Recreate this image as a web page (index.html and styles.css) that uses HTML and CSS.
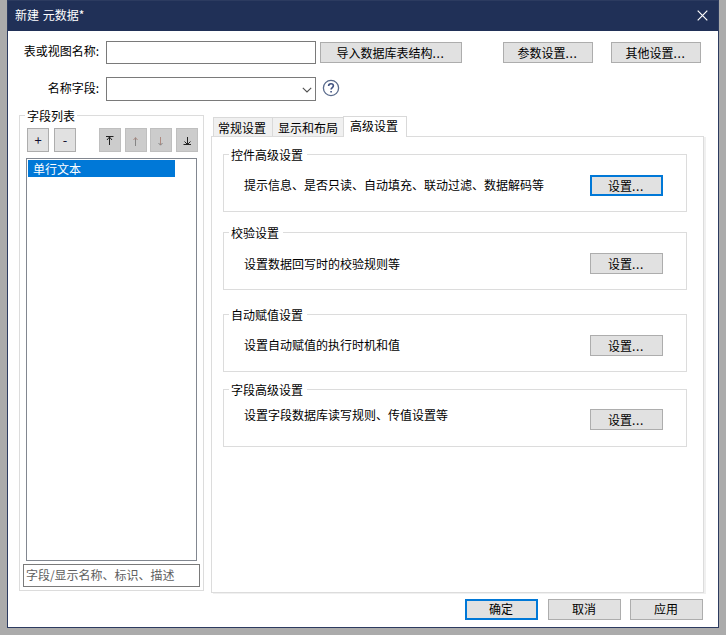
FILE: index.html
```
<!DOCTYPE html>
<html lang="zh-CN">
<head>
<meta charset="utf-8">
<title>新建 元数据</title>
<link rel="stylesheet" href="styles.css">
</head>
<body>
<main class="dialog">
  <header class="titlebar">
    <span>新建 元数据*</span>
    <svg class="close" width="11" height="11" viewBox="0 0 11 11"><path d="M.7.7l9.6 9.6M10.3.7L.7 10.3"/></svg>
  </header>
  <div class="form">
    <div class="row row-name">
      <label class="label">表或视图名称:</label>
      <div class="input"></div>
      <button class="btn import">导入数据库表结构<i>...</i></button>
      <button class="btn wide param">参数设置<i>...</i></button>
      <button class="btn wide other">其他设置<i>...</i></button>
    </div>
    <div class="row row-field">
      <label class="label">名称字段:</label>
      <div class="input combo"><svg width="10" height="6" viewBox="0 0 10 6"><path d="M.8.8L5 5 9.200.8"/></svg></div>
      <svg class="help" width="18" height="18" viewBox="0 0 18 18"><circle cx="9" cy="9" r="7.600"/><path class="q" d="M6.600 7.100C6.600 5.500 7.600 4.700 9 4.700s2.400.8 2.400 2.100c0 1.700-2.300 1.800-2.300 3.700M9.100 12v1.600"/></svg>
    </div>
  </div>
  <div class="content">
    <section class="fields">
      <h2 class="legend">字段列表</h2>
      <div class="tools">
        <button class="tool sign">+</button>
        <button class="tool sign minus">-</button>
        <button class="tool off first"><svg width="12" height="12" viewBox="0 0 12 12"><path class="k" d="M2 2.500h7.500M5.500 3v8M3 6l2.500-3L8 6"/></svg></button>
        <button class="tool off up"><svg width="12" height="12" viewBox="0 0 12 12"><path class="g" d="M5.500 3.500V12"/><path class="r" d="M3.500 6l2-2.300 2 2.300"/></svg></button>
        <button class="tool off down"><svg width="12" height="12" viewBox="0 0 12 12"><path class="r" d="M5.500 3v8"/><path class="g" d="M3.500 9l2 2.200 2-2.200"/></svg></button>
        <button class="tool off last"><svg width="12" height="12" viewBox="0 0 12 12"><path class="k" d="M6.500 3v8M3.500 7.500l3 3 3-3M2.500 10.500h7.500"/></svg></button>
      </div>
      <div class="list"><div class="item">单行文本</div></div>
      <div class="search">字段<span class="slash">/</span>显示名称、标识、描述</div>
    </section>
    <section class="tabs">
      <nav class="tabbar">
        <span class="tab">常规设置</span>
        <span class="tab mid">显示和布局</span>
        <span class="tab active">高级设置</span>
      </nav>
      <div class="panel">
        <div class="group g1"><h3 class="legend">控件高级设置</h3><div class="line"><p>提示信息、是否只读、自动填充、联动过滤、数据解码等</p><button class="btn set focus">设置<i>...</i></button></div></div>
        <div class="group g2"><h3 class="legend">校验设置</h3><div class="line"><p>设置数据回写时的校验规则等</p><button class="btn set">设置<i>...</i></button></div></div>
        <div class="group g3"><h3 class="legend">自动赋值设置</h3><div class="line"><p>设置自动赋值的执行时机和值</p><button class="btn set">设置<i>...</i></button></div></div>
        <div class="group g4"><h3 class="legend">字段高级设置</h3><div class="line"><p>设置字段数据库读写规则、传值设置等</p><button class="btn set">设置<i>...</i></button></div></div>
      </div>
    </section>
  </div>
  <footer class="footer">
    <button class="btn set focus">确定</button>
    <button class="btn set">取消</button>
    <button class="btn set apply">应用</button>
  </footer>
</main>
</body>
</html>
```
FILE: styles.css
```
* { box-sizing: border-box; }
body {
  margin: 0;
  height: 635px;
  overflow: hidden;
  background: #ababab;
  color: #000;
  font: 12px/18px "Noto Sans CJK SC", sans-serif;
}
h2, h3, p { margin: 0; font: inherit; }
i { font-style: normal; letter-spacing: .7px; }
svg { display: block; fill: none; flex: none; }
.dialog {
  display: flex;
  flex-direction: column;
  width: 712px;
  height: 628px;
  margin-left: 7px;
  border: 1px solid #2c3b60;
  background: #fff;
}
.titlebar {
  display: flex;
  align-items: center;
  justify-content: space-between;
  height: 30px;
  padding: 0 10px 2px 7px;
  background: #203057;
  color: #fff;
  word-spacing: 1px;
}
.close { margin-top: 1px; stroke: #fff; stroke-width: 1.200; }
.form { height: 84px; padding: 10px 0 0 15px; }
.row { display: flex; align-items: center; }
.row-name { height: 23px; }
.row-field { height: 24px; margin-top: 13px; }
.label { width: 83px; padding: 0 7px 3px 0; text-align: right; white-space: nowrap; }
.input { width: 210px; height: 100%; border: 1px solid #7a7a7a; background: #fff; }
.combo { display: flex; align-items: center; justify-content: flex-end; padding: 1px 3px 0 0; }
.combo svg { stroke: #505050; stroke-width: 1.100; }
.help { margin: -3px 0 0 6px; stroke: #5a6b8c; stroke-width: 1.300; }
.help .q { stroke: #3f5180; stroke-width: 1.600; }
.btn, .tool {
  display: flex;
  align-items: center;
  justify-content: center;
  flex: none;
  height: 21px;
  margin: 0;
  padding: 0;
  border: 1px solid #adadad;
  background: #e1e1e1;
  color: #000;
  font: inherit;
}
.btn { padding-right: 1px; }
.import { width: 142px; margin-left: 4px; }
.wide { width: 90px; }
.param { margin-left: 41px; }
.other { margin-left: 18px; }
.set { width: 73px; }
.focus { border: 2px solid #0078d7; }
.content { display: flex; }
.legend {
  width: max-content;
  height: 18px;
  margin: -9px 0 0 5px;
  padding: 0 4px 0 2px;
  background: #fff;
}
.fields { width: 185px; height: 476px; margin-left: 11px; border: 1px solid #dcdcdc; }
.fields > .legend { padding: 0 2px 0 2px; }
.tools { display: flex; height: 24px; margin: 3px 0 0 7px; }
.tool { width: 22px; height: 24px; }
.sign { font-size: 13px; color: #101030; }
.minus { margin-left: 5px; }
.off { border-color: #bfbfbf; background: #ccc; }
.first { margin-left: 23px; }
.up { margin-left: 4px; }
.down { margin-left: 3px; }
.last { margin-left: 4px; }
.k { stroke: #222; }
.g { stroke: #858585; }
.r { stroke: #ae8a80; }
.list { width: 171px; height: 403px; margin: 6px 0 0 6px; padding: 1px; border: 1px solid #828790; }
.item { width: 147px; height: 17px; padding-left: 5px; background: #0078d7; color: #fff; line-height: 17px; }
.search {
  width: 177px;
  height: 23px;
  margin: 3px 0 0 3px;
  padding-left: 2px;
  border: 1px solid #7a7a7a;
  color: #606060;
  line-height: 19px;
  white-space: nowrap;
}
.slash { letter-spacing: -.3px; }
.tabs { width: 495px; margin-left: 7px; }
.tabbar { display: flex; align-items: flex-end; height: 22px; padding-left: 2px; }
.tab {
  width: 60px;
  height: 19px;
  margin-bottom: 1px;
  padding-right: 1px;
  border: 1px solid #d9d9d9;
  border-bottom: 0;
  background: #f0f0f0;
  text-align: center;
  text-indent: -1px;
  line-height: 19px;
  white-space: nowrap;
}
.mid { width: 71px; padding: 0; border-left: 0; text-indent: 0; }
.active { width: 64px; height: 21px; margin: 0 0 0 -1px; background: #fff; line-height: 18px; z-index: 1; }
.panel {
  width: 493px;
  height: 457px;
  margin-top: -1px;
  padding: 17px 0 0 11px;
  border: 1px solid #dcdcdc;
  box-shadow: 2px 1px 0 #f0f0f0;
}
.group { width: 464px; height: 58px; border: 1px solid #dcdcdc; }
.g2 { margin-top: 20px; }
.g3 { margin-top: 24px; }
.g4 { margin-top: 17px; }
.line {
  display: flex;
  align-items: center;
  justify-content: space-between;
  height: 21px;
  margin-top: 11px;
  padding: 0 23px 0 20px;
}
.g1 p, .g3 p { margin-top: -2px; }
.g4 .line { margin-top: 10px; }
.g4 p { margin-top: -9px; }
.footer { display: flex; margin: 6px 0 0 457px; }
.footer .btn { margin-right: 10px; padding: 0 1px 1px 0; }
.footer .btn:nth-child(2) { margin-right: 9px; }
```
